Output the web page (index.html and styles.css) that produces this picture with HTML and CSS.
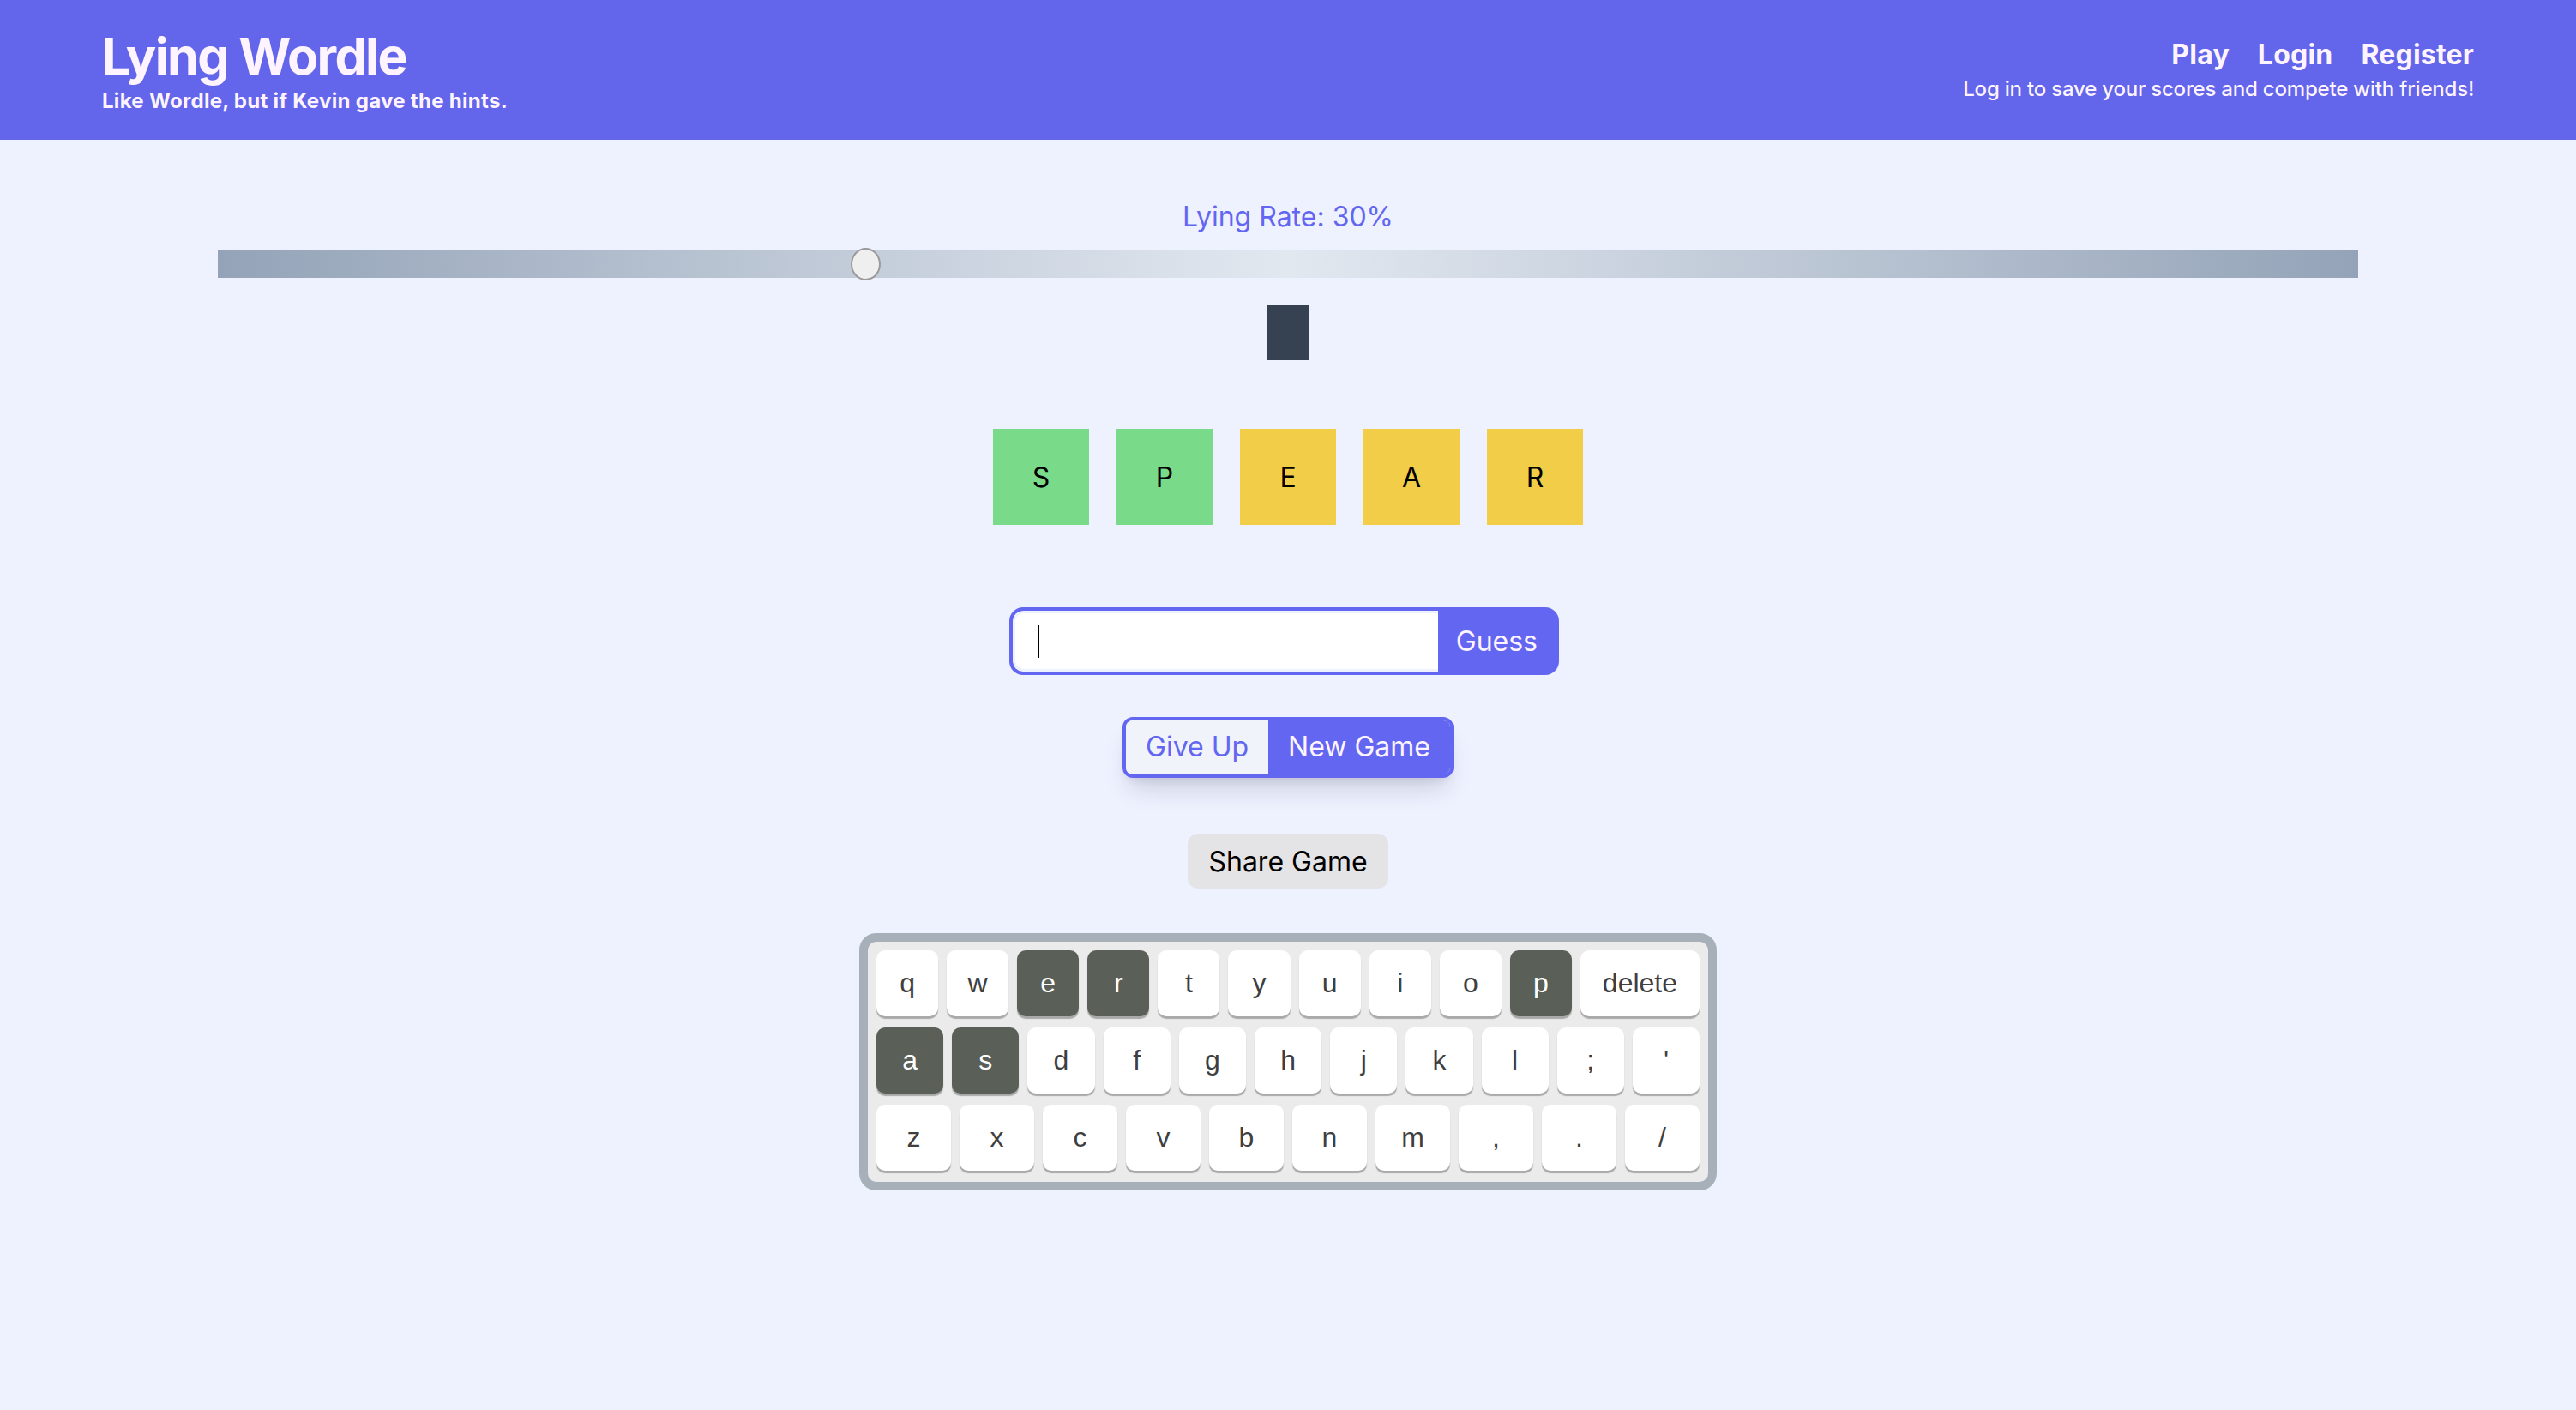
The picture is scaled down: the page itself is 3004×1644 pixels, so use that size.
FILE: index.html
```html
<!DOCTYPE html>
<html lang="en">
<head>
<meta charset="utf-8">
<title>Lying Wordle</title>
<link rel="stylesheet" href="styles.css">
</head>
<body>
<header class="topbar">
  <div class="brand">
    <h1 class="title">Lying Wordle</h1>
    <p class="tagline">Like Wordle, but if Kevin gave the hints.</p>
  </div>
  <div class="account">
    <nav class="nav">
      <a class="nav-link" href="#">Play</a>
      <a class="nav-link" href="#">Login</a>
      <a class="nav-link" href="#">Register</a>
    </nav>
    <p class="hint">Log in to save your scores and compete with friends!</p>
  </div>
</header>
<main class="game">
  <label class="rate-label" for="rate">Lying Rate: 30%</label>
  <div class="rate-wrap">
    <input id="rate" class="rate" type="range" min="0" max="100" value="30">
  </div>
  <div class="marker"></div>
  <div class="tiles">
    <div class="tile tile-green">S</div>
    <div class="tile tile-green">P</div>
    <div class="tile tile-yellow">E</div>
    <div class="tile tile-yellow">A</div>
    <div class="tile tile-yellow">R</div>
  </div>
  <form class="guess-form">
    <div class="guess-field"><span class="caret"></span></div>
    <button type="button" class="guess-btn">Guess</button>
  </form>
  <div class="actions">
    <button type="button" class="give-up">Give Up</button>
    <button type="button" class="new-game">New Game</button>
  </div>
  <button type="button" class="share">Share Game</button>
  <div class="keyboard">
    <div class="kb-row">
      <div class="key">q</div><div class="key">w</div><div class="key key-used">e</div><div class="key key-used">r</div><div class="key">t</div><div class="key">y</div><div class="key">u</div><div class="key">i</div><div class="key">o</div><div class="key key-used">p</div><div class="key key-wide">delete</div>
    </div>
    <div class="kb-row">
      <div class="key key-used">a</div><div class="key key-used">s</div><div class="key">d</div><div class="key">f</div><div class="key">g</div><div class="key">h</div><div class="key">j</div><div class="key">k</div><div class="key">l</div><div class="key">;</div><div class="key">'</div>
    </div>
    <div class="kb-row">
      <div class="key">z</div><div class="key">x</div><div class="key">c</div><div class="key">v</div><div class="key">b</div><div class="key">n</div><div class="key">m</div><div class="key">,</div><div class="key">.</div><div class="key">/</div>
    </div>
  </div>
</main>
</body>
</html>
```
FILE: styles.css
```css
body {
  margin: 0;
  background: #eef1fe;
  font-family: Inter, "Noto Sans", sans-serif;
  min-height: 1644px;
}

.topbar {
  background: #6366ea;
  color: #fdf4ff;
  height: 163px;
  box-sizing: border-box;
  padding: 0 119px;
  display: flex;
  justify-content: space-between;
  align-items: center;
}

.title {
  margin: 0;
  font-size: 59px;
  line-height: 72px;
  font-weight: 700;
  letter-spacing: -1.6px;
}

.tagline {
  margin: 0;
  font-size: 24px;
  line-height: 32px;
  font-weight: 700;
  letter-spacing: 0.3px;
}

.account {
  display: flex;
  flex-direction: column;
  align-items: flex-end;
  margin-bottom: 4px;
}

.nav {
  display: flex;
  gap: 33px;
}

.nav-link {
  color: #fdf4ff;
  text-decoration: none;
  font-size: 32px;
  line-height: 48px;
  font-weight: 700;
  letter-spacing: 0.2px;
}

.hint {
  margin: 0;
  font-size: 24px;
  line-height: 32px;
  font-weight: 500;
  letter-spacing: -0.2px;
}

.game {
  display: flex;
  flex-direction: column;
  align-items: center;
  padding-top: 66px;
}

.rate-label {
  font-size: 32px;
  line-height: 48px;
  color: #6366f1;
}

.rate-wrap {
  align-self: stretch;
  padding: 0 254px;
  margin-top: 15px;
}

.rate {
  -webkit-appearance: none;
  appearance: none;
  display: block;
  width: 100%;
  height: 32px;
  margin: 0;
  background: transparent;
}

.rate::-webkit-slider-runnable-track {
  height: 32px;
  background: linear-gradient(90deg, #94a3b8 0%, #e2e8f0 50%, #94a3b8 100%);
}

.rate::-webkit-slider-thumb {
  -webkit-appearance: none;
  appearance: none;
  box-sizing: border-box;
  width: 35px;
  height: 38px;
  margin-top: -3px;
  border-radius: 50%;
  background: #efefef;
  border: 2px solid #9a9a9a;
}

.marker {
  margin-top: 32px;
  width: 48px;
  height: 64px;
  background: #364152;
}

.tiles {
  margin-top: 80px;
  display: flex;
  gap: 32px;
}

.tile {
  width: 112px;
  height: 112px;
  display: flex;
  align-items: center;
  justify-content: center;
  font-size: 32px;
  color: #000;
}

.tile-green { background: #79db8a; }
.tile-yellow { background: #f2cd47; }

.guess-form {
  margin: 96px 9px 0 0;
  display: flex;
  width: 641px;
  height: 79px;
  box-sizing: border-box;
  border: 4px solid #6366f1;
  border-radius: 16px;
  overflow: hidden;
  background: #6366f1;
}

.guess-field {
  flex: 1;
  background: #fff;
  border: 3px solid #eef1fe;
  border-right: none;
  border-radius: 12px 0 0 12px;
  display: flex;
  align-items: center;
  padding-left: 26px;
}

.caret {
  width: 2px;
  height: 38px;
  background: #000;
}

.guess-btn {
  border: none;
  background: #6366f1;
  color: #fdf4ff;
  font-family: inherit;
  font-size: 32px;
  padding: 0 21px 0 21px;
  margin: 0;
}

.actions {
  margin-top: 49px;
  display: flex;
  border: 4px solid #6366f1;
  border-radius: 12px;
  overflow: hidden;
  box-shadow: 0 20px 30px -10px rgba(30, 30, 60, 0.18), 0 8px 12px -6px rgba(30, 30, 60, 0.1);
}

.give-up,
.new-game {
  border: none;
  margin: 0;
  font-family: inherit;
  font-size: 32px;
  line-height: 48px;
  padding: 7px 23px 8px;
}

.give-up {
  background: #f0f3fa;
  color: #6366f1;
}

.new-game {
  background: #6366f1;
  color: #fdf4ff;
}

.share {
  margin-top: 65px;
  height: 64px;
  padding: 0 24px;
  border: none;
  border-radius: 12px;
  background: #e4e4e7;
  color: #000;
  font-family: inherit;
  font-size: 32px;
}

.keyboard {
  margin-top: 52px;
  width: 1000px;
  box-sizing: border-box;
  border: 10px solid #a7b0b8;
  border-radius: 20px;
  background: #ebebeb;
  padding: 10px 10px 13px;
  display: flex;
  flex-direction: column;
  gap: 13px;
}

.kb-row {
  display: flex;
  gap: 10px;
}

.key {
  flex: 1 1 0;
  height: 77px;
  background: #fff;
  border-radius: 10px;
  box-shadow: 0 3px 1px rgba(0, 0, 0, 0.28);
  display: flex;
  align-items: center;
  justify-content: center;
  font-family: "Liberation Sans", Arial, sans-serif;
  font-size: 32px;
  color: #3f3f3f;
}

.key-wide {
  flex: 0 0 139px;
}

.key-used {
  background: #5a5f58;
  color: #fff;
}
```
